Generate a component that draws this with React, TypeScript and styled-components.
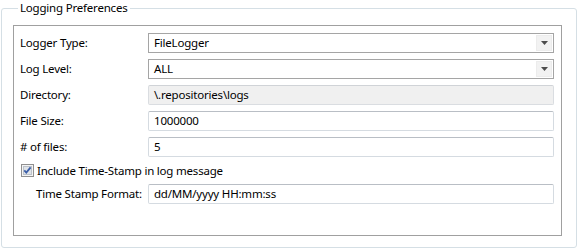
import styled, { createGlobalStyle } from "styled-components";

const GlobalStyle = createGlobalStyle`
    html, body {
        margin: 0;
        padding: 0;
        background: #ffffff;
    }
    body {
        font-family: "Noto Sans", "Segoe UI", sans-serif;
        font-size: 11.5px;
        letter-spacing: -0.2px;
        color: #000000;
    }
`;

function DownArrow() {
    return (
        <svg width="7" height="4" viewBox="0 0 7 4">
            <path d="M0 0 H7 L3.5 4 Z" fill="#4d4d4d" />
        </svg>
    );
}

function CheckMark() {
    return (
        <svg width="13" height="13" viewBox="0 0 13 13">
            <rect x="0.5" y="0.5" width="12" height="12" fill="#f4f4f4" stroke="#8f8f8f" />
            <rect x="2.5" y="2.5" width="8" height="8" fill="#dfe3e8" stroke="#bcc2c9" />
            <path d="M3.3 6.4 L5.3 8.6 L9.6 3.4" fill="none" stroke="#3b5ea8" strokeWidth="1.8" />
        </svg>
    );
}

function App() {
    return (
        <>
            <GlobalStyle />
            <Page>
                <Group>
                    <Legend>Logging Preferences</Legend>
                    <Panel>
                        <Label>Logger Type:</Label>
                        <Combo>
                            <span>FileLogger</span>
                            <ComboButton><DownArrow /></ComboButton>
                        </Combo>

                        <Label>Log Level:</Label>
                        <Combo>
                            <span>ALL</span>
                            <ComboButton><DownArrow /></ComboButton>
                        </Combo>

                        <Label>Directory:</Label>
                        <TextField $disabled>\.repositories\logs</TextField>

                        <Label>File Size:</Label>
                        <TextField>1000000</TextField>

                        <Label># of files:</Label>
                        <TextField>5</TextField>

                        <CheckRow>
                            <CheckMark />
                            <span>Include Time-Stamp in log message</span>
                        </CheckRow>

                        <Label $indent>Time Stamp Format:</Label>
                        <TextField>dd/MM/yyyy HH:mm:ss</TextField>
                    </Panel>
                </Group>
            </Page>
        </>
    );
}

const Page = styled.div`
    width: 579px;
    height: 249px;
    padding: 0 2px 0 1px;
    box-sizing: border-box;
`;

const Group = styled.fieldset`
    margin: 0;
    width: 576px;
    height: 248px;
    box-sizing: border-box;
    border: 1px solid #d5dfe5;
    border-radius: 3px;
    padding: 9px 14px 11px 11px;
`;

const Legend = styled.legend`
    padding: 0 2px;
    margin-left: 5px;
    line-height: 16px;
    color: #000000;
`;

const Panel = styled.div`
    display: grid;
    grid-template-columns: 128px 1fr;
    grid-template-rows: repeat(5, 20px) 15px 20px;
    row-gap: 6px;
    align-items: center;
    border: 1px solid #a0a0a0;
    height: 211px;
    box-sizing: border-box;
    padding: 7px 7px 0 6px;
`;

const Label = styled.div<{ $indent?: boolean }>`
    padding-left: ${(p) => (p.$indent ? "16px" : "0")};
    white-space: nowrap;
    line-height: 20px;
`;

const Combo = styled.div`
    display: flex;
    align-items: center;
    justify-content: space-between;
    height: 20px;
    box-sizing: border-box;
    border: 1px solid #a5a5a5;
    background: #ffffff;
    padding: 0 1px 0 5px;

    span {
        line-height: 18px;
    }
`;

const ComboButton = styled.div`
    display: flex;
    align-items: center;
    justify-content: center;
    width: 16px;
    height: 16px;
    background: #f2f2f2;
    border: 1px solid #ececec;
    box-sizing: border-box;
`;

const TextField = styled.div<{ $disabled?: boolean }>`
    height: 20px;
    box-sizing: border-box;
    border: 1px solid ${(p) => (p.$disabled ? "#dadde1" : "#d5dbe1")};
    border-top-color: ${(p) => (p.$disabled ? "#d0d3d7" : "#b9bec5")};
    border-radius: 2px;
    background: ${(p) => (p.$disabled ? "#f0f0f0" : "#ffffff")};
    padding: 0 5px;
    line-height: 18px;
    white-space: nowrap;
`;

const CheckRow = styled.label`
    grid-column: 1 / -1;
    display: flex;
    align-items: center;
    gap: 3px;
    padding-left: 1px;
    line-height: 15px;
`;

export default App;
